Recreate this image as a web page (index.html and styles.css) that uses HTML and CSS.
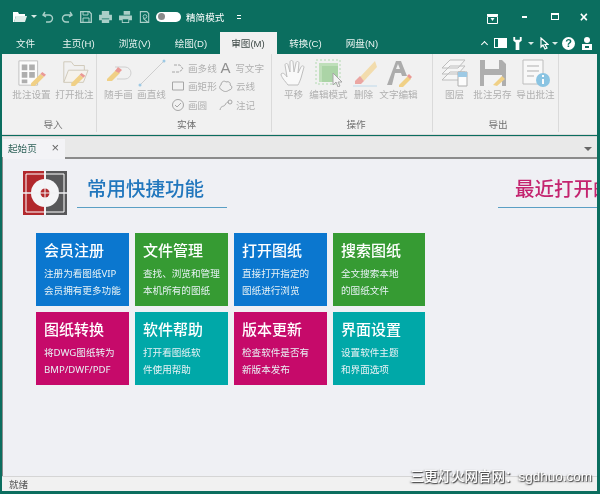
FILE: index.html
```html
<!DOCTYPE html>
<html lang="zh">
<head>
<meta charset="utf-8">
<title>看图纸</title>
<link rel="stylesheet" href="styles.css">
</head>
<body>
<div class="window">
  <header class="titlebar">
    <div class="qat">
      <svg class="qi w14" viewBox="0 0 14 12"><path d="M0 1h5l1 2h6v2H3L1 11H0z" fill="#fff"/><path d="M3 5h11l-2 6H1z" fill="#dfeeea"/></svg>
      <span class="caret qcaret"></span>
      <svg class="qi w12" viewBox="0 0 12 12"><path d="M3 1 1 4l3 2M1.500 4H7a3.500 3.500 0 0 1 0 7H4" fill="none" stroke="#a9cfc8" stroke-width="1.400"/></svg>
      <svg class="qi w12" viewBox="0 0 12 12"><path d="M9 1l2 3-3 2M10.500 4H5a3.500 3.500 0 0 0 0 7h3" fill="none" stroke="#a9cfc8" stroke-width="1.400"/></svg>
      <svg class="qi w12" viewBox="0 0 12 12"><path d="M.7.7h8.600l2 2v8.600H.7z" fill="none" stroke="#a9cfc8" stroke-width="1.300"/><path d="M3 1v3h5V1M3 11V7h6v4" fill="none" stroke="#a9cfc8"/></svg>
      <svg class="qi w13" viewBox="0 0 14 13"><path d="M3 0h8v4H3zM0 4h14v6h-3V8H3v2H0zM3 9h8v4H3z" fill="#a9cfc8"/></svg>
      <svg class="qi w13" viewBox="0 0 14 13"><path d="M5 0h7v4H5zM0 5h14v5h-3v3H3v-3H0z" fill="#a9cfc8"/><path d="M4 9h6v3H4z" fill="#0b6e5f"/></svg>
      <svg class="qi w12" viewBox="0 0 12 13"><path d="M1 .7h7l2 2v9.600H1zM4 8l5 4" fill="none" stroke="#a9cfc8" stroke-width="1.200"/><circle cx="6" cy="6" r="2" fill="none" stroke="#a9cfc8"/></svg>
      <span class="toggle"><span class="knob"></span></span>
      <span class="mode">精简模式</span>
      <span class="menu-dots"></span>
    </div>
    <div class="winctl">
      <svg class="pin" viewBox="0 0 11 10"><path d="M.5 2.500h10v7H.5z" fill="none" stroke="#fff"/><path d="M0 0h11v2H0z" fill="#fff"/><path d="M3.500 4h4L5.500 7z" fill="#fff"/></svg>
      <span class="min"></span>
      <span class="max"></span>
      <span class="close">×</span>
    </div>
  </header>

  <nav class="tabrow">
    <div class="tabs">
      <span class="tab first">文件</span>
      <span class="tab">主页(H)</span>
      <span class="tab">浏览(V)</span>
      <span class="tab">绘图(D)</span>
      <span class="tab active">审图(M)</span>
      <span class="tab">转换(C)</span>
      <span class="tab">网盘(N)</span>
    </div>
    <div class="tabtools">
      <span class="chev"></span>
      <svg class="panel" viewBox="0 0 13 10"><path d="M0 0h13v10H0z" fill="#fff"/><path d="M1 1h3v8H1z" fill="#0b6e5f"/></svg>
      <svg class="wrench" viewBox="0 0 9 14"><path d="M0 0v4l2.500 2v8h4V6L9 4V0H7v3H2V0z" fill="#fff"/></svg>
      <span class="caret"></span>
      <svg class="cursor" viewBox="0 0 9 13"><path d="M1 1v9l2-2 2 4 2-1-2-3.500h3z" fill="none" stroke="#fff" stroke-width="1.200"/></svg>
      <span class="caret caret-last"></span>
      <span class="help">?</span>
      <svg class="user" viewBox="0 0 10 13"><circle cx="5" cy="3" r="3" fill="#fff"/><path d="M0 7h10v6H0z" fill="#fff"/><path d="M3 9h4v2H3z" fill="#0b6e5f"/></svg>
    </div>
  </nav>

  <section class="ribbon">
    <div class="group g-import">
      <div class="items">
        <div class="big w-four">
          <svg class="ico" viewBox="0 0 30 28"><path d="M1 1h20v26H1z" fill="#fff" stroke="#b5b5b5"/><path d="M4 5h6v6H4zm8 0h6v6h-6zM4 13h6v6H4zm8 0h6v6h-6zM4 21h6v4H4z" fill="#a3a3a3"/><path d="m14 25 10-10 4 3-10 10h-4z" fill="#f0cb74"/><path d="m24 15 2-2 4 3-2 2z" fill="#e98a86"/></svg>
          <span>批注设置</span>
        </div>
        <div class="big w-four">
          <svg class="ico" viewBox="0 0 30 28"><path d="M3 24V2h8l3 4h11v5" fill="none" stroke="#c8c0ad"/><path d="M3 24 8 11h21l-5 13z" fill="#f6f3ec" stroke="#c8c0ad"/><path d="m11 25 9-9 4 3-9 9h-4z" fill="#f0cb74"/><path d="m20 16 2-2 4 3-2 2z" fill="#e98a86"/></svg>
          <span>打开批注</span>
        </div>
      </div>
      <div class="gname">导入</div>
    </div>

    <div class="group g-entity">
      <div class="items">
        <div class="big w-three">
          <svg class="ico" viewBox="0 0 28 28"><path d="M10 8h10a6 6 0 0 1 0 12h-8" fill="none" stroke="#c9c9c9"/><path d="m2 20 9-9 4 3-8 8H2z" fill="#f0cb74"/><path d="m10 12 3-4 4 3-3 3z" fill="#e98a86"/></svg>
          <span>随手画</span>
        </div>
        <div class="big w-three">
          <svg class="ico" viewBox="0 0 28 28"><path d="M2 26 26 2" stroke="#c9c9c9"/><circle cx="2" cy="26" r="1.500" fill="#8fc3e2"/><circle cx="26" cy="2" r="1.500" fill="#8fc3e2"/></svg>
          <span>画直线</span>
        </div>
        <div class="smalls">
          <div class="small"><svg viewBox="0 0 14 12"><path d="M1 10h7l4-3-3-4H3" fill="none" stroke="#a6a6a6" stroke-dasharray="3 1"/></svg><span>画多线</span></div>
          <div class="small"><svg viewBox="0 0 14 12"><path d="M1.500 2h11v8h-11z" fill="none" stroke="#a6a6a6"/></svg><span>画矩形</span></div>
          <div class="small"><svg viewBox="0 0 14 12"><circle cx="7" cy="6" r="5.500" fill="none" stroke="#a6a6a6"/><path d="m4 6 2 2 4-4" fill="none" stroke="#a6a6a6"/></svg><span>画圆</span></div>
        </div>
        <div class="smalls">
          <div class="small"><b class="glyph">A</b><span>写文字</span></div>
          <div class="small"><svg viewBox="0 0 14 12"><path d="M3 10C0 9 0 6 2 5 2 2 5 0 7 2c3-1 5 1 4 3 3 1 2 5-1 5-2 2-5 2-7 0z" fill="none" stroke="#a6a6a6"/></svg><span>云线</span></div>
          <div class="small"><svg viewBox="0 0 14 12"><path d="M1 11c1-5 4-3 5-5s2-3 4-3" fill="none" stroke="#a6a6a6"/><circle cx="11" cy="3" r="2" fill="none" stroke="#a6a6a6"/></svg><span>注记</span></div>
        </div>
      </div>
      <div class="gname">实体</div>
    </div>

    <div class="group g-action">
      <div class="items">
        <div class="big w-two">
          <svg class="ico" viewBox="0 0 28 28"><path d="M8 26C5 22 1 18 1 15c2-2 4 0 6 3L5 6c0-2 3-2 3 0l2 7V3c0-2 3-2 3 0l1 10 2-9c0-2 3-2 3 0l-1 10 3-6c1-2 3-1 3 0l-3 11c-1 3-2 5-3 7z" fill="#fbfbfb" stroke="#b5b5b5"/></svg>
          <span>平移</span>
        </div>
        <div class="big w-four">
          <svg class="ico" viewBox="0 0 28 28"><path d="M1 1h24v24H1z" fill="none" stroke="#a9d6a8" stroke-dasharray="2 2"/><path d="M4 4h19v19H4z" fill="#b7dcb1"/><path d="M7 7h16v16H7z" fill="#9fd09a"/><path d="M18 14v12l3-3 2 5 2-1-2-4h4z" fill="#f5f5f5" stroke="#9a9a9a"/></svg>
          <span>编辑模式</span>
        </div>
        <div class="big w-two">
          <svg class="ico" viewBox="0 0 28 28"><path d="M3 27h24" stroke="#b7d5e8"/><path d="m10 18 15-16 2 6-13 14z" fill="#f3d9a2"/><path d="m5 22 5-5 4 5-3 3H5z" fill="#ea9a95"/></svg>
          <span>删除</span>
        </div>
        <div class="big w-four">
          <svg class="ico" viewBox="0 0 28 28"><path d="M2 26 11 2h5l6 15h-5l-1-3H10l-3 12zM11 10h4l-2-5z" fill="#a1a1a1" fill-rule="evenodd"/><path d="m14 26 9-9 3 3-8 8h-4z" fill="#f0cb74"/><path d="m22 17 2-2 3 3-2 2z" fill="#e98a86"/></svg>
          <span>文字编辑</span>
        </div>
      </div>
      <div class="gname">操作</div>
    </div>

    <div class="group g-export">
      <div class="items">
        <div class="big w-two">
          <svg class="ico" viewBox="0 0 28 28"><path d="M1 9 9 1h15l-7 8zM1 15l8-8h15l-7 8zM1 21l8-8h15l-7 8z" fill="#f7f7f7" stroke="#b5b5b5"/><path d="M17 13h9v14h-9z" fill="#fff" stroke="#a3a3a3"/><path d="M17 13h9v5h-9z" fill="#8fc3e2"/></svg>
          <span>图层</span>
        </div>
        <div class="big w-four">
          <svg class="ico" viewBox="0 0 28 28"><path d="M1 1h22l4 4v22H1z" fill="#a3a3a3"/><path d="M6 1h14v9H6zM5 16h18v11H5z" fill="#f4f4f4"/><path d="m14 26 9-9 3 3-8 7z" fill="#f0cb74"/></svg>
          <span>批注另存</span>
        </div>
        <div class="big w-four">
          <svg class="ico" viewBox="0 0 28 28"><path d="M1 1h20v24H1z" fill="#fafafa" stroke="#b5b5b5"/><path d="M5 7h12M5 12h12M5 17h7" stroke="#a3a3a3"/><circle cx="21" cy="21" r="7" fill="#79bde0"/><path d="M20 20h2v5h-2zM20 16h2v2h-2z" fill="#fff"/></svg>
          <span>导出批注</span>
        </div>
      </div>
      <div class="gname">导出</div>
    </div>
  </section>

  <div class="docbar">
    <div class="doctab"><span>起始页</span><span class="docx">×</span></div>
    <span class="docmenu"></span>
  </div>

  <main class="home">
    <div class="left">
      <div class="headrow">
        <svg class="logo" viewBox="0 0 44 44">
          <path d="M0 0h21v44H0z" fill="#b2282c"/>
          <path d="M23 0h21v44H23z" fill="#58585a"/>
          <path d="M3 3h38v38H3z" fill="none" stroke="#fff" stroke-width="1"/>
          <circle cx="22" cy="22" r="14" fill="#f4f4f6"/>
          <path d="M0 22h44M22 0v44" stroke="#f1f1f4" stroke-width="1.500"/>
          <circle cx="22" cy="22" r="4.500" fill="#b2282c"/>
          <path d="M17 22h10M22 17v10" stroke="#f4f4f6" stroke-width="1"/>
        </svg>
        <h1 class="heading blue">常用快捷功能</h1>
      </div>
      <div class="tiles">
        <a class="tile c-blue"><h2>会员注册</h2><p>注册为看图纸VIP</p><p>会员拥有更多功能</p></a>
        <a class="tile c-green"><h2>文件管理</h2><p>查找、浏览和管理</p><p>本机所有的图纸</p></a>
        <a class="tile c-blue"><h2>打开图纸</h2><p>直接打开指定的</p><p>图纸进行浏览</p></a>
        <a class="tile c-green"><h2>搜索图纸</h2><p>全文搜索本地</p><p>的图纸文件</p></a>
        <a class="tile c-pink"><h2>图纸转换</h2><p>将DWG图纸转为</p><p>BMP/DWF/PDF</p></a>
        <a class="tile c-teal"><h2>软件帮助</h2><p>打开看图纸软</p><p>件使用帮助</p></a>
        <a class="tile c-pink"><h2>版本更新</h2><p>检查软件是否有</p><p>新版本发布</p></a>
        <a class="tile c-teal"><h2>界面设置</h2><p>设置软件主题</p><p>和界面选项</p></a>
      </div>
    </div>
    <div class="right">
      <h1 class="heading pink">最近打开的</h1>
    </div>
  </main>

  <footer class="status">就绪</footer>
  <div class="watermark">三更灯火网官网：sgdhuo.com</div>
</div>
</body>
</html>
```
FILE: styles.css
```css
* { box-sizing: border-box; margin: 0; padding: 0; }
html, body { width: 600px; height: 494px; overflow: hidden; }
body { font-family: "Liberation Sans", "Noto Sans CJK SC", sans-serif; background: #0b6e5f; }

.window { position: relative; width: 600px; height: 494px; display: flex; flex-direction: column; padding: 0 3px 3px 2px; background: #0b6e5f; overflow: hidden; filter: blur(.35px); }

.titlebar { height: 32px; flex: none; display: flex; justify-content: space-between; align-items: center; padding-top: 1px; }
.qat { display: flex; align-items: center; gap: 7px; padding-left: 11px; }
.qi { height: 12px; flex: none; }
.w14 { width: 14px; }
.w13 { width: 13px; }
.w12 { width: 12px; }
.caret { width: 0; height: 0; border: 3px solid transparent; border-top-color: #d7e9e5; border-bottom: 0; flex: none; }
.qcaret { margin: 0 -2px 0 -3px; }
.toggle { width: 25px; height: 10px; border-radius: 5px; background: #fff; display: flex; align-items: center; padding-left: 2px; margin-left: -2px; }
.knob { width: 7px; height: 7px; border-radius: 50%; background: #8a8a8a; }
.mode { color: #fff; font-size: 9.600px; margin-left: -2px; }
.menu-dots { width: 4px; height: 4px; margin-left: 6px; border-top: 1px solid #fff; border-bottom: 1px solid #fff; }

.winctl { display: flex; align-items: center; padding-right: 9px; }
.pin { width: 11px; height: 10px; margin: 5px 24px 0 0; }
.min { width: 5px; height: 2px; background: #fff; margin-right: 24px; }
.max { width: 8px; height: 7px; border: 1px solid #fff; border-top-width: 2px; margin-right: 21px; }
.close { color: #fff; font-size: 14px; line-height: 12px; font-weight: bold; }

.tabrow { height: 22px; flex: none; display: flex; justify-content: space-between; align-items: flex-end; }
.tabs { display: flex; padding-left: 2px; }
.tab { height: 22px; padding: 5px 12px 0; font-size: 9.600px; line-height: 13px; color: #e8f3f0; white-space: nowrap; }
.tab.first { padding-right: 15px; }
.tab.active { background: #f1f1f1; color: #3f4a48; margin: 0 0 0 1px; padding: 5px 11px 0; width: 57px; }
.tabtools { display: flex; align-items: center; gap: 6px; height: 22px; padding-right: 5px; }
.chev { width: 5px; height: 5px; border-left: 1px solid #fff; border-top: 1px solid #fff; transform: rotate(45deg); margin: 3px 1px 0 0; }
.panel { width: 13px; height: 10px; }
.wrench { width: 9px; height: 13px; }
.cursor { width: 9px; height: 13px; }
.caret-last { margin-left: -3px; }
.help { width: 13px; height: 13px; border-radius: 50%; background: #fff; color: #0b6e5f; font-size: 11px; font-weight: bold; line-height: 13px; text-align: center; margin-left: -2px; }
.user { width: 10px; height: 13px; margin-left: 1px; }

.ribbon { height: 81px; flex: none; display: flex; background: #f1f1f1; border-bottom: 1px solid #dcdcdc; }
.group { display: flex; flex-direction: column; border-right: 1px solid #dadada; height: 78px; flex: none; }
.g-import { width: 95px; padding-left: 8px; }
.g-entity { width: 175px; padding-left: 5px; }
.g-action { width: 161px; padding-left: 8px; }
.g-export { width: 126px; padding-left: 5px; }
.items { height: 65px; display: flex; padding-top: 5px; }
.big { display: flex; flex-direction: column; align-items: center; font-size: 9.600px; line-height: 12px; color: #b0b0b0; flex: none; gap: 2px; white-space: nowrap; }
.big .ico { width: 28px; height: 28px; opacity: .85; }
.w-four { width: 43px; }
.w-three { width: 33px; }
.w-two { width: 33px; }
.gname { font-size: 9.600px; line-height: 12px; text-align: center; color: #6f6f6f; }
.smalls { width: 48px; display: flex; flex-direction: column; gap: 5.500px; padding: 2px 0 0 3px; flex: none; }
.small { display: flex; align-items: center; gap: 3px; height: 13px; font-size: 9.600px; color: #b0b0b0; white-space: nowrap; }
.small svg { width: 14px; height: 12px; flex: none; }
.glyph { width: 14px; text-align: center; font-size: 15px; line-height: 13px; font-weight: normal; color: #8f8f8f; }
.g-action .w-two:first-child { width: 27px; }
.g-action .w-two:nth-child(3) { width: 27px; }

.docbar { height: 23px; flex: none; display: flex; justify-content: space-between; align-items: flex-end; background: #e9e9e9; border-top: 1px solid #d5d5d5; border-bottom: 2px solid #8b8b8b; margin-top: 1px; padding-left: 1px; }
.doctab { height: 20px; margin-bottom: -2px; width: 62px; background: #f3f3f6; display: flex; align-items: center; justify-content: space-between; padding: 0 6px 2px 5px; font-size: 9.600px; color: #2f6259; }
.docx { font-size: 13px; color: #666; line-height: 12px; }
.docmenu { width: 0; height: 0; border: 4px solid transparent; border-top-color: #666; border-bottom: 0; margin: 0 5px 6px 0; }

.home { flex: 1; min-height: 0; display: flex; background: #eff0f4; border-left: 1px solid #8b8b8b; overflow: hidden; }
.left { width: 495px; flex: none; padding: 9px 0 0 20px; }
.headrow { display: flex; align-items: flex-start; height: 66px; }
.logo { width: 44px; height: 44px; flex: none; margin-top: 3px; }
.heading { font-weight: 500; font-size: 19.500px; line-height: 28px; white-space: nowrap; border-bottom: 1px solid #5a9fc4; }
.heading.blue { color: #2277bd; width: 150px; margin: 0 0 0 10px; padding: 7px 0 0 10px; height: 40px; }
.heading.pink { color: #c4246f; padding: 7px 0 0 17px; height: 40px; overflow: hidden; }
.right { flex: 1; padding-top: 9px; min-width: 0; overflow: hidden; }
.tiles { display: grid; grid-template-columns: 93px 93px 93px 92px; grid-auto-rows: 73px; gap: 6px 6px; margin-left: 13px; margin-top: -1px; }
.tile { display: block; padding: 8px 0 0 8px; color: #e8f2f5; font-family: "Noto Sans", "Noto Sans CJK SC", sans-serif; font-size: 9.600px; line-height: 17px; white-space: nowrap; }
.tile h2 { font-size: 15px; font-weight: 500; color: #fff; line-height: 18px; margin-bottom: 6px; }
.c-blue { background: #0b77cf; }
.c-green { background: #369b33; }
.c-pink { background: #c60a6a; }
.c-teal { background: #00a8a8; }

.status { height: 15px; flex: none; background: #f1f1f1; border-top: 1px solid #d5d5d5; font-size: 9.600px; line-height: 15px; color: #555; padding-left: 7px; }
.watermark { position: absolute; right: 8px; top: 468px; color: #fff; font-size: 13.500px; line-height: 17px; font-weight: 500; text-shadow: 1px 1px 1px #444, -1px 1px 2px #777; white-space: nowrap; }
```
